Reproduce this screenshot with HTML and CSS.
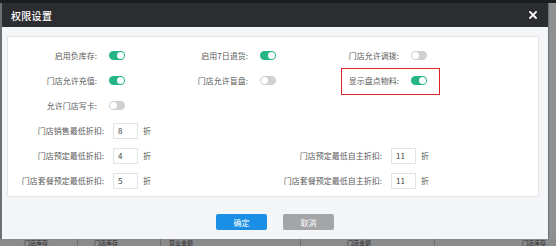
FILE: index.html
```html
<!DOCTYPE html>
<html lang="zh-CN">
<head>
<meta charset="utf-8">
<title>权限设置</title>
<link rel="stylesheet" href="styles.css">
</head>
<body>
<div class="topbar"></div>
<div class="stage">
  <div class="modal">
    <div class="modal-header">
      <span class="modal-title">权限设置</span>
      <svg class="modal-close" width="8" height="8" viewBox="0 0 8 8" aria-label="关闭"><path d="M1 1 L7 7 M7 1 L1 7" stroke="#fff" stroke-width="1.8" stroke-linecap="square"/></svg>
    </div>
    <div class="modal-body">
      <div class="panel">
        <div class="row row-3">
          <div class="field"><span class="label">启用负库存:</span><span class="switch on"></span></div>
          <div class="field"><span class="label">启用7日退货:</span><span class="switch on"></span></div>
          <div class="field"><span class="label">门店允许调拨:</span><span class="switch"></span></div>
        </div>
        <div class="row row-3">
          <div class="field"><span class="label">门店允许充值:</span><span class="switch on"></span></div>
          <div class="field"><span class="label">门店允许盲盘:</span><span class="switch"></span></div>
          <div class="field highlight"><span class="label">显示盘点物料:</span><span class="switch on"></span></div>
        </div>
        <div class="row row-3">
          <div class="field"><span class="label">允许门店写卡:</span><span class="switch"></span></div>
        </div>
        <div class="row row-2">
          <div class="field"><span class="label wide">门店销售最低折扣:</span><span class="input">8</span><span class="unit">折</span></div>
        </div>
        <div class="row row-2">
          <div class="field"><span class="label wide">门店预定最低折扣:</span><span class="input">4</span><span class="unit">折</span></div>
          <div class="field"><span class="label wider">门店预定最低自主折扣:</span><span class="input">11</span><span class="unit">折</span></div>
        </div>
        <div class="row row-2">
          <div class="field"><span class="label wide">门店套餐预定最低折扣:</span><span class="input">5</span><span class="unit">折</span></div>
          <div class="field"><span class="label wider">门店套餐预定最低自主折扣:</span><span class="input">11</span><span class="unit">折</span></div>
        </div>
      </div>
      <div class="footer">
        <span class="btn btn-primary">确定</span>
        <span class="btn btn-cancel">取消</span>
      </div>
    </div>
  </div>
  <div class="side"></div>
</div>
<div class="under">
  <span class="cell c1">门店库存</span>
  <span class="cell c2">门店库存</span>
  <span class="cell c3">营业金额</span>
  <span class="cell c4">门店金额</span>
  <span class="cell c5">门店库存</span>
</div>
</body>
</html>
```

FILE: styles.css
```css
* { box-sizing: border-box; }
html, body {
  margin: 0;
  padding: 0;
}
body {
  width: 556px;
  height: 246px;
  overflow: hidden;
  background: #7b7c7e;
  font-family: "Noto Sans CJK SC", "Noto Sans", sans-serif;
  font-size: 8px;
  color: #555;
}
.topbar {
  height: 3px;
  background: #1d1e20;
}
.stage {
  display: flex;
  height: 236px;
  padding-left: 2px;
  background: #6e6f71;
}
.modal {
  width: 546px;
  height: 236px;
  display: flex;
  flex-direction: column;
  background: #f4f5f7;
}
.side {
  flex: 1;
  background: #8e8f91;
  border-left: 1px solid #6f7072;
}
.modal-header {
  height: 24px;
  flex: none;
  background: #2c2d30;
  display: flex;
  align-items: center;
  justify-content: space-between;
  padding: 0 11px 0 9px;
}
.modal-title {
  color: #fff;
  font-size: 10px;
  font-weight: 500;
  letter-spacing: 0.3px;
}
.modal-close {
  display: block;
}
.modal-body {
  flex: 1;
  display: flex;
  flex-direction: column;
  padding: 9px 9px 0 5px;
}
.panel {
  background: #fff;
  border: 1px solid #e4e5e8;
  padding: 6px 0 3px 0;
}
.row {
  height: 25px;
  display: grid;
  align-items: center;
}
.row-3 { grid-template-columns: 151px 151px 151px; }
.row-2 { grid-template-columns: 272px auto; }
.field {
  display: flex;
  align-items: center;
  height: 25px;
  position: relative;
}
.label {
  width: 89px;
  text-align: right;
  white-space: nowrap;
  color: #5a5a5a;
}
.label.wide { width: 96px; }
.label.wider { width: 102px; }
.switch {
  width: 16px;
  height: 9px;
  border-radius: 5px;
  background: #cfd0d3;
  margin-left: 12px;
  position: relative;
}
.switch::after {
  content: "";
  position: absolute;
  top: 1px;
  left: 1px;
  width: 7px;
  height: 7px;
  border-radius: 50%;
  background: #fff;
}
.switch.on { background: #25b589; }
.switch.on::after { left: 8px; }
.input {
  width: 25px;
  height: 16px;
  margin-left: 9px;
  border: 1px solid #e2e3e6;
  background: #fff;
  color: #444;
  padding-left: 4px;
  display: flex;
  align-items: center;
}
.unit {
  margin-left: 5px;
  color: #555;
}
.highlight::after {
  content: "";
  position: absolute;
  left: 31px;
  top: 0;
  width: 97px;
  height: 25px;
  border: 1.5px solid #e0242a;
}
.footer {
  flex: 1;
  display: flex;
  justify-content: center;
  gap: 16px;
  padding-top: 17px;
  padding-left: 4px;
}
.btn {
  width: 51px;
  height: 16px;
  border-radius: 2px;
  color: #fff;
  display: flex;
  align-items: center;
  justify-content: center;
  font-size: 8px;
}
.btn-primary { background: #1b8fe6; }
.btn-cancel { background: #a4a5a7; }
.under {
  height: 7px;
  background: #8a8b8d;
  display: flex;
  overflow: hidden;
  font-size: 6px;
  color: #2a2a2a;
}
.cell {
  display: block;
  border-right: 1px solid #6d6e70;
  padding-left: 24px;
  height: 7px;
  line-height: 7px;
  white-space: nowrap;
}
.c1 { width: 78px; }
.c2 { width: 83px; padding-left: 16px; }
.c3 { width: 140px; padding-left: 8px; }
.c4 { width: 134px; padding-left: 46px; }
.c5 { flex: 1; text-align: right; padding-right: 10px; border-right: none; }
```
